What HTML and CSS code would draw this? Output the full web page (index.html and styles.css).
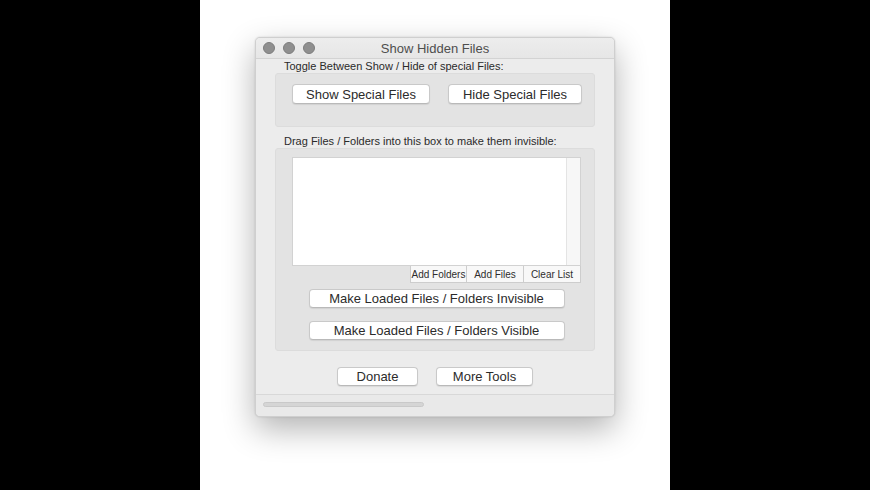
FILE: index.html
```html
<!DOCTYPE html>
<html lang="en">
<head>
    <meta charset="UTF-8">
    <meta name="viewport" content="width=device-width, initial-scale=1.0">
    <title>Show Hidden Files</title>
    <link rel="stylesheet" href="styles.css">
</head>
<body>
    <div class="side"></div>

    <div class="stage">
        <div class="window">
            <div class="titlebar">
                <div class="lights">
                    <span class="light"></span>
                    <span class="light"></span>
                    <span class="light"></span>
                </div>
                <div class="title">Show Hidden Files</div>
                <div></div>
            </div>

            <div class="content">
                <div class="label">Toggle Between Show / Hide of special Files:</div>
                <div class="group group-toggle">
                    <button type="button" class="btn btn-show">Show Special Files</button>
                    <button type="button" class="btn btn-hide">Hide Special Files</button>
                </div>

                <div class="label label-drag">Drag Files / Folders into this box to make them invisible:</div>
                <div class="group group-drop">
                    <div class="file-list">
                        <div class="list-body"></div>
                        <div class="list-scroll"></div>
                    </div>
                    <div class="list-actions">
                        <button type="button" class="mini-btn">Add Folders</button>
                        <button type="button" class="mini-btn">Add Files</button>
                        <button type="button" class="mini-btn">Clear List</button>
                    </div>
                    <button type="button" class="btn btn-wide">Make Loaded Files / Folders Invisible</button>
                    <button type="button" class="btn btn-wide btn-second">Make Loaded Files / Folders Visible</button>
                </div>

                <div class="footer-buttons">
                    <button type="button" class="btn btn-donate">Donate</button>
                    <button type="button" class="btn btn-tools">More Tools</button>
                </div>
            </div>

            <div class="statusbar">
                <div class="progress"></div>
            </div>
        </div>
    </div>

    <div class="side"></div>
</body>
</html>
```

FILE: styles.css
```css
* {
    margin: 0;
    padding: 0;
    box-sizing: border-box;
    font-family: "Liberation Sans", Arial, sans-serif;
}

body {
    background: #000;
    display: flex;
    height: 490px;
    overflow: hidden;
}

.side {
    width: 200px;
    background: #000;
}

.stage {
    width: 470px;
    background: #fff;
    padding: 37px 0 0 55px;
}

.window {
    width: 360px;
    height: 380px;
    background: #ececec;
    border: 1px solid #cfcfcf;
    border-radius: 5px;
    box-shadow: 0 12px 32px rgba(0, 0, 0, 0.3), 0 0 2px rgba(0, 0, 0, 0.15);
    display: flex;
    flex-direction: column;
    overflow: hidden;
}

.titlebar {
    height: 21px;
    display: grid;
    grid-template-columns: 1fr auto 1fr;
    align-items: center;
    background: linear-gradient(#ededed, #e6e6e6);
    border-bottom: 1px solid #d3d3d3;
}

.lights {
    display: flex;
    gap: 8px;
    padding-left: 7px;
}

.light {
    width: 12px;
    height: 12px;
    border-radius: 50%;
    background: #8f8f8f;
    border: 1px solid #7d7d7d;
}

.title {
    font-size: 13px;
    color: #4e4e4e;
}

.content {
    padding: 0 19px;
    flex: 1;
}

.label {
    font-size: 11px;
    line-height: 14px;
    color: #2a2a2a;
    padding-left: 9px;
}

.label-drag {
    margin-top: 7px;
}

.group {
    background: #e3e3e3;
    border: 1px solid #dcdcdc;
    border-radius: 3px;
}

.group-toggle {
    height: 54px;
    display: flex;
    gap: 18px;
    padding: 10px 0 0 16px;
}

.btn {
    background: #fff;
    border: 1px solid #c9c9c9;
    border-bottom-color: #b9b9b9;
    border-radius: 4px;
    box-shadow: 0 1px 1px rgba(0, 0, 0, 0.08);
    font-size: 13px;
    color: #2b2b2b;
    height: 19px;
    line-height: 17px;
}

.btn-show {
    width: 138px;
    height: 20px;
}

.btn-hide {
    width: 134px;
    height: 20px;
}

.group-drop {
    height: 203px;
    padding: 8px 13px 0 16px;
    display: flex;
    flex-direction: column;
    align-items: center;
}

.file-list {
    width: 289px;
    height: 109px;
    background: #fff;
    border: 1px solid #d2d2d2;
    display: flex;
}

.list-body {
    flex: 1;
}

.list-scroll {
    width: 14px;
    background: #f7f7f7;
    border-left: 1px solid #e4e4e4;
}

.list-actions {
    width: 289px;
    display: flex;
    justify-content: flex-end;
}

.mini-btn {
    width: 57px;
    height: 17px;
    background: #f8f8f8;
    border: 1px solid #cdcdcd;
    border-top: none;
    font-size: 10px;
    color: #2e2e2e;
}

.mini-btn + .mini-btn {
    border-left: none;
}

.btn-wide {
    width: 256px;
    margin-top: 6px;
}

.btn-second {
    margin-top: 13px;
}

.footer-buttons {
    display: flex;
    justify-content: center;
    gap: 18px;
    margin-top: 16px;
}

.btn-donate {
    width: 81px;
}

.btn-tools {
    width: 97px;
}

.statusbar {
    height: 22px;
    border-top: 1px solid #d8d8d8;
    background: #e9e9e9;
    padding: 7px 0 0 7px;
}

.progress {
    width: 161px;
    height: 5px;
    background: #d5d5d5;
    border: 1px solid #c9c9c9;
    border-radius: 3px;
}
```
